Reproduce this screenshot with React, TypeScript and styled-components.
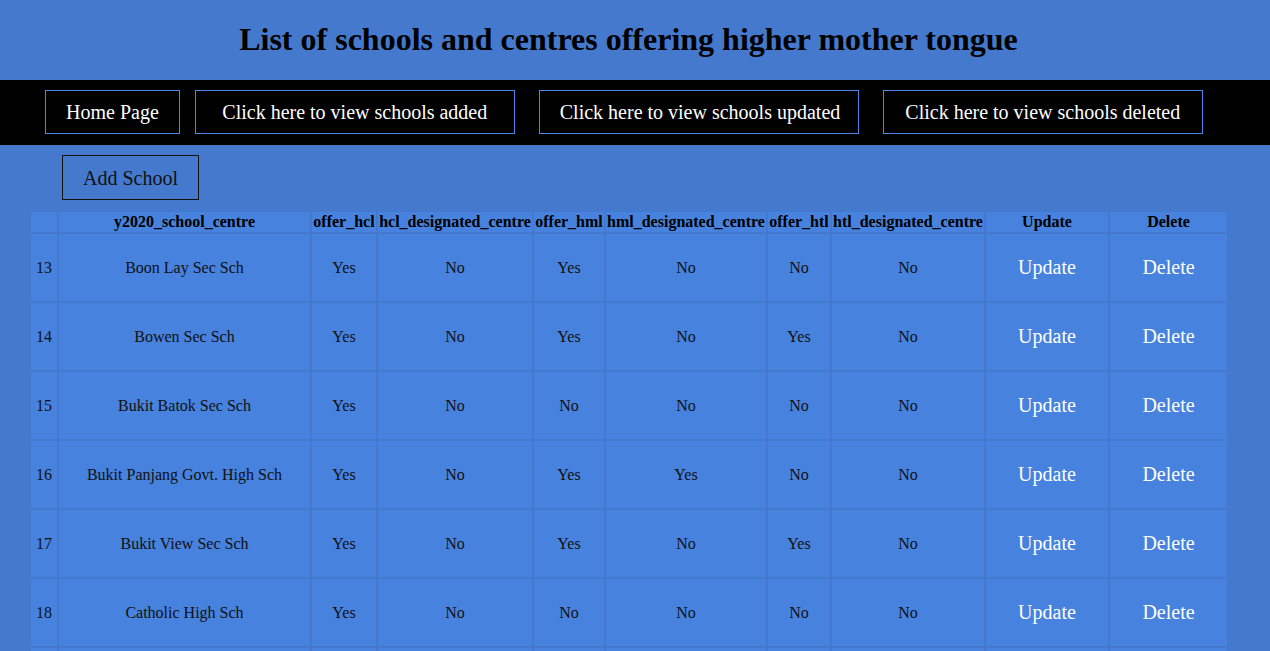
import React from "react";
import styled, { createGlobalStyle } from "styled-components";

const GlobalStyle = createGlobalStyle`
  html, body {
    margin: 0;
    padding: 0;
    background: #4479cd;
    font-family: "Liberation Serif", "Times New Roman", serif;
    color: #000;
  }
`;

const Title = styled.h1`
  margin: 0;
  padding: 21px 13px 22px 0;
  font-size: 32px;
  line-height: 37px;
  font-weight: bold;
  text-align: center;
  color: #000;
`;

const NavBar = styled.nav`
  display: flex;
  align-items: flex-start;
  background: #000;
  padding: 10px 0 11px 45px;
`;

const NavButton = styled.a<{ $width?: number; $ml?: number }>`
  display: block;
  box-sizing: border-box;
  width: ${(p) => (p.$width ? `${p.$width}px` : "auto")};
  margin-left: ${(p) => p.$ml ?? 0}px;
  padding: 10px 20px;
  border: 1px solid #4a86e8;
  color: #fff;
  font-size: 20px;
  line-height: 22px;
  text-align: center;
  text-decoration: none;
  white-space: nowrap;
`;

const AddButton = styled.button`
  display: block;
  box-sizing: border-box;
  margin: 10px 0 10px 62px;
  width: 137px;
  height: 45px;
  padding: 0;
  border: 1px solid #111;
  background: transparent;
  color: #111;
  font-family: "Liberation Serif", "Times New Roman", serif;
  font-size: 20px;
  line-height: 22px;
`;

const Table = styled.table`
  margin-left: 29px;
  width: 1200px;
  table-layout: fixed;
  border-collapse: separate;
  border-spacing: 2px;
`;

const HeadCell = styled.th`
  background: #4682de;
  padding: 1px 0;
  height: 18px;
  font-size: 16px;
  line-height: 18px;
  font-weight: bold;
  text-align: center;
  white-space: nowrap;
  overflow: hidden;
  color: #000;
`;

const Cell = styled.td<{ $action?: boolean }>`
  background: #4682de;
  padding: 1px 0;
  height: 65px;
  text-align: center;
  vertical-align: middle;
  font-size: ${(p) => (p.$action ? "20px" : "16px")};
  line-height: ${(p) => (p.$action ? "23px" : "18px")};
  color: ${(p) => (p.$action ? "#fff" : "#111")};
`;

const ActionLink = styled.a`
  color: #fff;
  text-decoration: none;
`;

const widths = [26, 251, 64, 154, 70, 160, 62, 152, 122, 117];

const headers = [
  "",
  "y2020_school_centre",
  "offer_hcl",
  "hcl_designated_centre",
  "offer_hml",
  "hml_designated_centre",
  "offer_htl",
  "htl_designated_centre",
  "Update",
  "Delete",
];

const rows: string[][] = [
  ["13", "Boon Lay Sec Sch", "Yes", "No", "Yes", "No", "No", "No"],
  ["14", "Bowen Sec Sch", "Yes", "No", "Yes", "No", "Yes", "No"],
  ["15", "Bukit Batok Sec Sch", "Yes", "No", "No", "No", "No", "No"],
  ["16", "Bukit Panjang Govt. High Sch", "Yes", "No", "Yes", "Yes", "No", "No"],
  ["17", "Bukit View Sec Sch", "Yes", "No", "Yes", "No", "Yes", "No"],
  ["18", "Catholic High Sch", "Yes", "No", "No", "No", "No", "No"],
  ["19", "CHIJ Katong Convent", "Yes", "No", "No", "No", "No", "No"],
];

export default function App() {
  return (
    <>
      <GlobalStyle />
      <Title>List of schools and centres offering higher mother tongue</Title>
      <NavBar>
        <NavButton href="#">Home Page</NavButton>
        <NavButton href="#" $width={320} $ml={15}>
          Click here to view schools added
        </NavButton>
        <NavButton href="#" $width={320} $ml={24}>
          Click here to view schools updated
        </NavButton>
        <NavButton href="#" $width={320} $ml={24}>
          Click here to view schools deleted
        </NavButton>
      </NavBar>
      <AddButton>Add School</AddButton>
      <Table>
        <colgroup>
          {widths.map((w, i) => (
            <col key={i} style={{ width: w }} />
          ))}
        </colgroup>
        <thead>
          <tr>
            {headers.map((h, i) => (
              <HeadCell key={i}>{h}</HeadCell>
            ))}
          </tr>
        </thead>
        <tbody>
          {rows.map((r) => (
            <tr key={r[0]}>
              {r.map((v, i) => (
                <Cell key={i}>{v}</Cell>
              ))}
              <Cell $action>
                <ActionLink href="#">Update</ActionLink>
              </Cell>
              <Cell $action>
                <ActionLink href="#">Delete</ActionLink>
              </Cell>
            </tr>
          ))}
        </tbody>
      </Table>
    </>
  );
}
